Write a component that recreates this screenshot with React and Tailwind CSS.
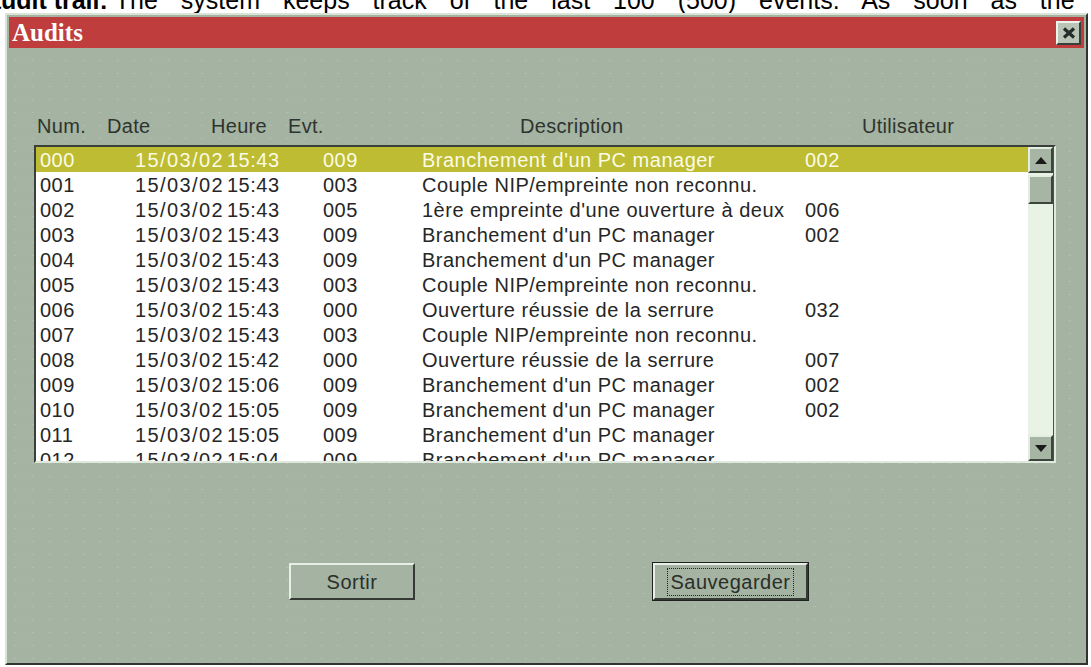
import React from "react";

/* audit log entries shown in the list */
const ROWS = [
  ["000", "15/03/02", "15:43", "009", "Branchement d'un PC manager", "002"],
  ["001", "15/03/02", "15:43", "003", "Couple NIP/empreinte non reconnu.", ""],
  ["002", "15/03/02", "15:43", "005", "1ère empreinte d'une ouverture à deux", "006"],
  ["003", "15/03/02", "15:43", "009", "Branchement d'un PC manager", "002"],
  ["004", "15/03/02", "15:43", "009", "Branchement d'un PC manager", ""],
  ["005", "15/03/02", "15:43", "003", "Couple NIP/empreinte non reconnu.", ""],
  ["006", "15/03/02", "15:43", "000", "Ouverture réussie de la serrure", "032"],
  ["007", "15/03/02", "15:43", "003", "Couple NIP/empreinte non reconnu.", ""],
  ["008", "15/03/02", "15:42", "000", "Ouverture réussie de la serrure", "007"],
  ["009", "15/03/02", "15:06", "009", "Branchement d'un PC manager", "002"],
  ["010", "15/03/02", "15:05", "009", "Branchement d'un PC manager", "002"],
  ["011", "15/03/02", "15:05", "009", "Branchement d'un PC manager", ""],
  ["012", "15/03/02", "15:04", "009", "Branchement d'un PC manager", ""],
];

const Arrow = ({ up }) => (
  <svg width="12" height="7" viewBox="0 0 12 7">
    <path d={up ? "M0 7 L6 0 L12 7 Z" : "M0 0 L6 7 L12 0 Z"} fill="#1a1a1a" />
  </svg>
);

const ScrollButton = ({ up }) => (
  <div className="w-[25px] h-[26px] bg-[#a6b5a4] border-2 border-t-[#e4ede2] border-l-[#e4ede2] border-r-[#3c453b] border-b-[#3c453b] flex items-center justify-center">
    <Arrow up={up} />
  </div>
);

export default function App() {
  return (
    <div className="w-[1091px] h-[667px] bg-white overflow-hidden font-['Liberation_Sans',Arial,sans-serif]">
      {/* cut-off line of the surrounding manual text */}
      <div className="h-[13px] overflow-hidden">
        <p className="mt-[-12px] ml-[-13px] whitespace-nowrap text-[25px] leading-[25px] text-black [word-spacing:16px]">
          <b className="[word-spacing:0px]">audit trail: </b>The system keeps track of the last 100 (500) events. As soon as the
        </p>
      </div>

      {/* dialog window */}
      <div className="ml-[5px] w-[1083px] h-[652px] border-2 border-t-[#d9e4d6] border-l-[#d9e4d6] border-r-[#2f342e] border-b-[#2f342e] bg-[#a4b3a2] bg-[radial-gradient(#b2c0b0_0.8px,transparent_1.3px)] bg-[size:17px_13px] p-[2px] flex flex-col">
        <div className="h-[31px] bg-[#bf3d3d] flex items-center justify-between pl-[3px] pr-[3px]">
          <span className="font-['Liberation_Serif',serif] font-bold text-[25px] text-white leading-none">
            Audits
          </span>
          <div className="w-[25px] h-[24px] bg-[#b9c5b6] border-2 border-t-[#eef3ec] border-l-[#eef3ec] border-r-[#39403a] border-b-[#39403a] flex items-center justify-center">
            <svg width="14" height="12" viewBox="0 0 14 12">
              <path d="M2 1.5 L12 10.5 M12 1.5 L2 10.5" stroke="#262c27" strokeWidth="3.2" />
            </svg>
          </div>
        </div>

        <div className="flex-1 flex flex-col pl-[25px] pt-[68px] text-[20px] leading-none">
          {/* column headers */}
          <div className="relative h-[20px] text-[#2e332e] tracking-[0.3px]">
            <span className="absolute left-[3px]">Num.</span>
            <span className="absolute left-[73px]">Date</span>
            <span className="absolute left-[177px]">Heure</span>
            <span className="absolute left-[254px]">Evt.</span>
            <span className="absolute left-[486px]">Description</span>
            <span className="absolute left-[828px]">Utilisateur</span>
          </div>

          {/* list box */}
          <div className="mt-[9px] w-[1022px] h-[318px] border-2 border-t-[#3a3f39] border-l-[#3a3f39] border-r-[#dfe8dc] border-b-[#dfe8dc] bg-white flex overflow-hidden">
            <div className="flex-1 overflow-hidden">
              {ROWS.map((r, i) => (
                <div
                  key={r[0]}
                  className={
                    "h-[25px] flex items-center whitespace-nowrap tracking-[0.5px] " +
                    (i === 0 ? "bg-[#bdbc33] text-[#fbfbe4]" : "text-[#262626]")
                  }
                >
                  <span className="w-[99px] pl-[4px]">{r[0]}</span>
                  <span className="w-[92px] tracking-[1.4px]">{r[1]}</span>
                  <span className="w-[96px]">{r[2]}</span>
                  <span className="w-[99px]">{r[3]}</span>
                  <span className="w-[383px]">{r[4]}</span>
                  <span>{r[5]}</span>
                </div>
              ))}
            </div>
            <div className="w-[26px] bg-[#e8f2e5] border-r border-[#4a5249] flex flex-col justify-between">
              <div>
                <ScrollButton up />
                <div className="w-[25px] h-[29px] mt-[2px] bg-[#a6b5a4] border-2 border-t-[#e4ede2] border-l-[#e4ede2] border-r-[#3c453b] border-b-[#3c453b]" />
              </div>
              <ScrollButton />
            </div>
          </div>

          {/* action buttons */}
          <div className="flex items-center mt-[99px] pl-[255px]">
            <button className="w-[126px] h-[37px] bg-[#a4b3a2] border-2 border-t-[#e8efe6] border-l-[#e8efe6] border-r-[#353a34] border-b-[#353a34] text-[#2a2f2a] tracking-[0.5px]">
              Sortir
            </button>
            <button className="ml-[237px] w-[157px] h-[39px] border border-[#1e221e] bg-[#a4b3a2]">
              <div className="h-full border-2 border-t-[#e8efe6] border-l-[#e8efe6] border-r-[#353a34] border-b-[#353a34] flex items-center justify-center">
                <span className="border border-dotted border-[#222] px-[2px] py-[3px] text-[#2a2f2a] tracking-[0.5px]">
                  Sauvegarder
                </span>
              </div>
            </button>
          </div>
        </div>
      </div>
    </div>
  );
}
